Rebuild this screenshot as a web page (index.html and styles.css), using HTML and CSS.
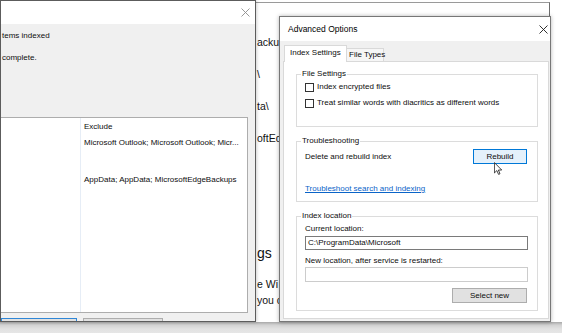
FILE: index.html
```html
<!DOCTYPE html>
<html>
<head>
<meta charset="utf-8">
<link rel="stylesheet" href="styles.css">
</head>
<body>
<div class="desk">

  <div class="bgwin">
    <div class="bg-line">ackup</div>
    <div class="bg-line">\</div>
    <div class="bg-line">ta\</div>
    <div class="bg-line">oftEd</div>
    <div class="bg-head">gs</div>
    <div class="bg-para">
      <div class="bg-pline">e Wi</div>
      <div class="bg-pline">you c</div>
    </div>
  </div>

  <div class="dlg-left">
    <div class="tb-left">
      <svg class="x-grey" width="9" height="9" viewBox="0 0 9 9"><path d="M0.5 0.5 L8.5 8.5 M8.5 0.5 L0.5 8.5" stroke="#8c8c8c" stroke-width="0.9" fill="none"/></svg>
    </div>
    <div class="lbody">
      <div class="l-line">tems indexed</div>
      <div class="l-line l-line2">complete.</div>
      <div class="list">
        <div class="col-a"></div>
        <div class="col-b">
          <div class="hdr">Exclude</div>
          <div class="row">Microsoft Outlook; Microsoft Outlook; Micr...</div>
          <div class="row row3">AppData; AppData; MicrosoftEdgeBackups</div>
        </div>
      </div>
      <div class="lbtns">
        <div class="lbtn lbtn-a"></div>
        <div class="lbtn lbtn-b"></div>
      </div>
    </div>
  </div>

  <div class="dlg-adv">
    <div class="tb-adv">
      <span class="adv-title">Advanced Options</span>
      <svg width="9" height="9" viewBox="0 0 9 9"><path d="M0.5 0.5 L8.5 8.5 M8.5 0.5 L0.5 8.5" stroke="#1a1a1a" stroke-width="0.9" fill="none"/></svg>
    </div>
    <div class="adv-body">
      <div class="tabs">
        <div class="tab-sel">Index Settings</div>
        <div class="tab">File Types</div>
      </div>
      <div class="panel">
        <fieldset class="grp g1">
          <legend>File Settings</legend>
          <div class="chk-row"><span class="box"></span><span>Index encrypted files</span></div>
          <div class="chk-row chk-row2"><span class="box"></span><span>Treat similar words with diacritics as different words</span></div>
        </fieldset>
        <fieldset class="grp g2">
          <legend>Troubleshooting</legend>
          <div class="rb-row"><span>Delete and rebuild index</span><span class="btn btn-hot">Rebuild</span></div>
          <span class="link">Troubleshoot search and indexing</span>
        </fieldset>
        <fieldset class="grp g3">
          <legend>Index location</legend>
          <div class="lbl">Current location:</div>
          <div class="field field-on">C:\ProgramData\Microsoft</div>
          <div class="lbl lbl2">New location, after service is restarted:</div>
          <div class="field field-off"></div>
          <div class="btn-row"><span class="btn btn-sel">Select new</span></div>
        </fieldset>
      </div>
    </div>
  </div>

  <svg class="cursor" width="8" height="13" viewBox="0 0 12 19"><path d="M0.6 0.6 V16.2 L4.3 12.6 L6.8 18.3 L9 17.4 L6.6 11.8 H11.6 Z" fill="#fff" stroke="#000" stroke-width="1.1" stroke-linejoin="miter"/></svg>

</div>
</body>
</html>
```

FILE: styles.css
```css
* { box-sizing: border-box; margin: 0; padding: 0; }
html, body { width: 562px; height: 333px; overflow: hidden; }
body {
  font-family: "Liberation Sans", Arial, sans-serif;
  font-size: 8px;
  line-height: 10px;
  color: #0d0d0d;
  background: #fff;
}
.desk {
  position: relative;
  width: 562px;
  height: 333px;
  background: linear-gradient(to bottom, #fff 0, #fff 322px, #a8a8a8 322px, #d2d2d2 325px, #e2e2e2 329px, #e6e6e6 333px);
}

/* background settings window */
.bgwin {
  position: absolute;
  left: 256px;
  top: 2px;
  width: 294px;
  height: 320px;
  background: #fff;
  border-top: 1px solid #9a9a9a;
  border-right: 1px solid #6e6e6e;
  padding: 23px 0 0 1px;
  font-size: 10.5px;
  line-height: 32px;
  color: #111;
  overflow: hidden;
}
.bg-line { white-space: nowrap; }
.bg-head { font-size: 14px; line-height: 20px; margin-top: 89px; white-space: nowrap; }
.bg-para { margin-top: 13px; line-height: 16px; }
.bg-pline { white-space: nowrap; }

/* left dialog (Indexing Options) */
.dlg-left {
  position: absolute;
  left: 0;
  top: 0;
  width: 256px;
  height: 322px;
  border: 1px solid #5c5c5c;
  background: #f0f0f0;
  display: flex;
  flex-direction: column;
  overflow: hidden;
  box-shadow: 1px 0 3px rgba(0,0,0,0.18);
  z-index: 2;
}
.tb-left {
  height: 23px;
  flex: none;
  background: #fff;
  display: flex;
  justify-content: flex-end;
  align-items: center;
  padding-right: 5px;
}
.lbody {
  flex: 1;
  padding: 7px 0 0 1px;
  display: flex;
  flex-direction: column;
}
.l-line { white-space: nowrap; }
.l-line2 { margin-top: 12px; }
.list {
  flex: none;
  margin-top: 54px;
  margin-left: -1px;
  width: 247px;
  height: 196px;
  background: #fff;
  border: 1px solid #adadad;
  border-left: none;
  display: grid;
  grid-template-columns: 80px 1fr;
}
.col-a { border-right: 1px solid #e6edf6; }
.col-b { padding: 1px 0 0 3px; white-space: nowrap; overflow: hidden; }
.hdr { line-height: 16px; }
.row { line-height: 16px; }
.row3 { margin-top: 21px; }
.lbtns {
  flex: none;
  display: flex;
  gap: 6px;
  margin-top: 5px;
  margin-left: -1px;
}
.lbtn { height: 20px; background: #e1e1e1; }
.lbtn-a { width: 76px; border: 1px solid #2f86d6; }
.lbtn-b { width: 80px; border: 1px solid #adadad; }

/* Advanced Options dialog */
.dlg-adv {
  position: absolute;
  left: 279px;
  top: 16px;
  width: 272px;
  height: 306px;
  border: 1px solid #777;
  background: #f0f0f0;
  box-shadow: 0 0 4px rgba(0,0,0,0.3);
  display: flex;
  flex-direction: column;
  overflow: hidden;
  z-index: 3;
}
.tb-adv {
  flex: none;
  height: 24px;
  background: #fff;
  display: flex;
  align-items: center;
  justify-content: space-between;
  padding: 0 2px 0 8px;
}
.adv-title { font-size: 8.5px; color: #000; }
.adv-body {
  flex: 1;
  padding: 4px 1px 0 3px;
  display: flex;
  flex-direction: column;
}
.tabs {
  display: flex;
  align-items: flex-end;
  padding-left: 1px;
  margin-bottom: -1px;
  position: relative;
  z-index: 1;
}
.tab-sel {
  width: 63px;
  height: 17px;
  background: #fff;
  border: 1px solid #d9d9d9;
  border-bottom: none;
  padding-left: 5px;
  line-height: 14px;
  white-space: nowrap;
}
.tab {
  width: 37px;
  height: 13px;
  margin-bottom: 1px;
  background: #f6f6f6;
  border: 1px solid #d9d9d9;
  border-left: none;
  border-bottom: none;
  padding-left: 2px;
  line-height: 12px;
  white-space: nowrap;
}
.panel {
  height: 258px;
  background: #fff;
  border: 1px solid #d9d9d9;
  padding: 7px 10px 0 12px;
}
.grp {
  border: 1px solid #dcdcdc;
  padding: 2px 9px 17px 8px;
  min-width: 0;
}
.grp legend {
  margin-left: -4px;
  padding: 0 1px;
  line-height: 10px;
}
.chk-row {
  display: flex;
  align-items: center;
  gap: 3px;
  height: 12px;
  white-space: nowrap;
}
.chk-row2 { margin-top: 4px; }
.box {
  width: 9px;
  height: 9px;
  border: 1px solid #333;
  background: #fff;
  flex: none;
}
.g2 { margin-top: 9px; padding: 3px 9px 7px 8px; }
.rb-row {
  display: flex;
  justify-content: space-between;
  align-items: center;
  height: 15px;
}
.btn {
  height: 15px;
  line-height: 13px;
  text-align: center;
  margin-right: 1px;
  display: block;
}
.btn-hot { width: 54px; border: 1px solid #0078d7; background: #e5f1fb; }
.link {
  display: block;
  margin-top: 20px;
  color: #0a64c8;
  text-decoration: underline;
  white-space: nowrap;
}
.g3 { margin-top: 9px; padding: 3px 9px 7px 8px; }
.lbl { white-space: nowrap; }
.lbl2 { margin-top: 6px; }
.field {
  background: #fff;
  padding-left: 2px;
  white-space: nowrap;
}
.field-on { margin-top: 2px; height: 14px; line-height: 12px; border: 1px solid #7a7a7a; }
.field-off { margin-top: 1px; height: 15px; border: 1px solid #cccccc; }
.btn-row { display: flex; justify-content: flex-end; margin-top: 6px; }
.btn-sel { width: 75px; border: 1px solid #adadad; background: #e1e1e1; }

.cursor {
  position: absolute;
  left: 494px;
  top: 162px;
  z-index: 5;
}
```
